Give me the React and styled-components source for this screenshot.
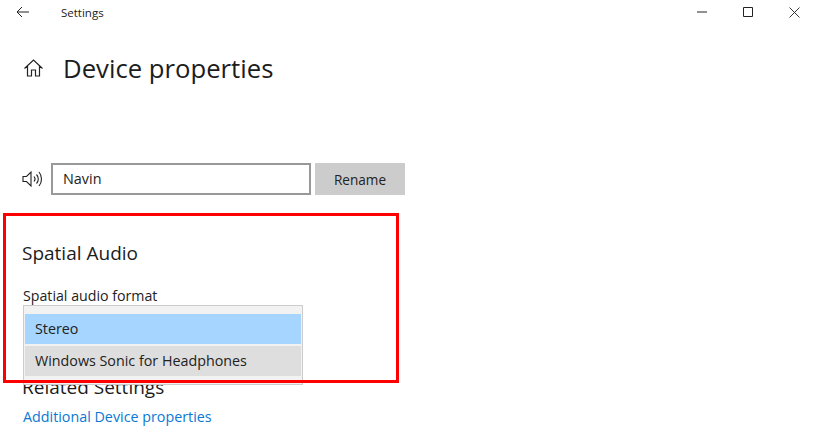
import React from 'react';
import styled, { createGlobalStyle } from 'styled-components';

const GlobalStyle = createGlobalStyle`
  html, body {
    margin: 0;
    padding: 0;
    background: #fff;
    overflow: hidden;
  }
  body {
    font-family: "Open Sans", "Noto Sans", "Liberation Sans", sans-serif;
    color: #1a1a1a;
  }
`;

const Page = styled.div`
  position: relative;
  width: 817px;
  height: 443px;
  overflow: hidden;
  background: #fff;
`;

const TitleBar = styled.div`
  display: flex;
  align-items: center;
  height: 24px;
  padding-left: 16px;
`;

const AppName = styled.span`
  margin-left: 31px;
  font-size: 11.5px;
  color: #222;
`;

const WindowButtons = styled.div`
  display: flex;
  margin-left: auto;
`;

const WindowButton = styled.div`
  display: flex;
  align-items: center;
  justify-content: center;
  width: 46px;
  height: 24px;
`;

const Heading = styled.div`
  display: flex;
  align-items: center;
  height: 34px;
  margin-top: 27px;
  padding-left: 24px;
`;

const PageTitle = styled.h1`
  margin: 1px 0 0 20px;
  font-size: 25.7px;
  font-weight: 400;
  line-height: 34px;
  color: #1c1c1c;
`;

const DeviceRow = styled.div`
  display: flex;
  align-items: center;
  margin-top: 78px;
  padding-left: 22px;
`;

const NameInput = styled.div`
  box-sizing: border-box;
  display: flex;
  align-items: center;
  width: 260px;
  height: 32px;
  margin-left: 7px;
  padding: 0 0 2px 10px;
  border: 2px solid #999;
  font-size: 14.4px;
  color: #222;
`;

const RenameButton = styled.div`
  display: flex;
  align-items: center;
  justify-content: center;
  width: 90px;
  height: 32px;
  margin-left: 4px;
  background: #ccc;
  font-size: 13.6px;
  color: #222;
`;

const Section = styled.section`
  margin-top: 46px;
  padding-left: 22px;
`;

const SectionTitle = styled.h2`
  margin: 0;
  font-size: 19px;
  font-weight: 400;
  line-height: 24px;
  color: #1c1c1c;
`;

const FieldLabel = styled.div`
  margin-top: 22px;
  margin-left: 1px;
  font-size: 14.2px;
  line-height: 18px;
  color: #222;
`;

const SelectGap = styled.div`
  height: 70px;
`;

const MoreLink = styled.a`
  display: block;
  margin-top: 9px;
  margin-left: 1px;
  font-size: 14.3px;
  line-height: 18px;
  color: #0a78d4;
`;

const Popup = styled.div`
  position: absolute;
  left: 23px;
  top: 305px;
  box-sizing: border-box;
  width: 280px;
  height: 80px;
  padding: 8px 1px 0;
  background: #f2f2f2;
  border: 1px solid #ccc;
`;

const PopupItem = styled.div`
  display: flex;
  align-items: center;
  box-sizing: border-box;
  height: 30px;
  margin-bottom: 2px;
  padding: 0 0 2px 10px;
  background: ${props => (props.$selected ? '#a6d5ff' : '#dedede')};
  font-size: 14.3px;
  color: #222;
`;

const Highlight = styled.div`
  position: absolute;
  left: 3px;
  top: 213px;
  box-sizing: border-box;
  width: 396px;
  height: 170px;
  border: 3px solid #f00;
  pointer-events: none;
`;

const BackIcon = () => (
  <svg width="14" height="12" viewBox="0 0 14 12" fill="none" stroke="#222" strokeWidth="1">
    <path d="M1 6H13M6 1L1 6L6 11" />
  </svg>
);

const HomeIcon = () => (
  <svg width="19" height="18" viewBox="0 0 19 18" fill="none" stroke="#222" strokeWidth="1.2">
    <path d="M.5 9.5L9.5 1L18.5 9.5M3.5 7V17H7.5V11H11.5V17H15.5V7" />
  </svg>
);

const SpeakerIcon = () => (
  <svg width="22" height="18" viewBox="0 0 22 18" fill="none" stroke="#222" strokeWidth="1.1">
    <path d="M1 6.5H4.5L9 2V16L4.5 11.5H1Z" />
    <path d="M12 6.5C13.3 8 13.3 10 12 11.5" />
    <path d="M14.5 4.5C16.9 7 16.9 11 14.5 13.5" />
    <path d="M17 2C20.3 6 20.3 12 17 16" />
  </svg>
);

const App = () => {
  return (
    <Page>
      <GlobalStyle />
      <TitleBar>
        <BackIcon />
        <AppName>Settings</AppName>
        <WindowButtons>
          <WindowButton>
            <svg width="10" height="2" viewBox="0 0 10 2" stroke="#222"><path d="M0 1H10" /></svg>
          </WindowButton>
          <WindowButton>
            <svg width="10" height="10" viewBox="0 0 10 10" fill="none" stroke="#222"><path d="M.5.5H9.5V9.5H.5Z" /></svg>
          </WindowButton>
          <WindowButton>
            <svg width="11" height="11" viewBox="0 0 11 11" fill="none" stroke="#222" strokeWidth="0.9"><path d="M.5.5L10.5 10.5M10.5.5L.5 10.5" /></svg>
          </WindowButton>
        </WindowButtons>
      </TitleBar>

      <Heading>
        <HomeIcon />
        <PageTitle>Device properties</PageTitle>
      </Heading>

      <DeviceRow>
        <SpeakerIcon />
        <NameInput>Navin</NameInput>
        <RenameButton>Rename</RenameButton>
      </DeviceRow>

      <Section>
        <SectionTitle>Spatial Audio</SectionTitle>
        <FieldLabel>Spatial audio format</FieldLabel>
        <SelectGap />
        <SectionTitle>Related Settings</SectionTitle>
        <MoreLink>Additional Device properties</MoreLink>
      </Section>

      <Popup>
        <PopupItem $selected>Stereo</PopupItem>
        <PopupItem>Windows Sonic for Headphones</PopupItem>
      </Popup>
      <Highlight />
    </Page>
  );
};

export default App;
